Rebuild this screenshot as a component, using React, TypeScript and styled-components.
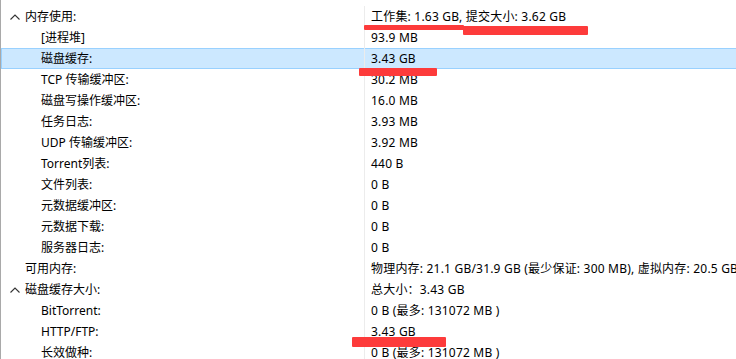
import React from "react";
import styled, { createGlobalStyle } from "styled-components";

const Global = createGlobalStyle`
  html, body { margin: 0; padding: 0; background: #fff; overflow: hidden; }
  body { font-family: "Noto Sans", "Noto Sans CJK SC", sans-serif; font-size: 12px; color: #000; }
`;

const Panel = styled.div`
  position: relative;
  width: 736px;
  height: 359px;
  box-sizing: border-box;
  border-left: 1px solid #a9a9a9;
  padding-top: 6px;
  overflow: hidden;
`;

const Row = styled.div<{ $selected?: boolean }>`
  display: grid;
  grid-template-columns: 363px 1fr;
  height: 21px;
  width: 760px;
  box-sizing: border-box;
  background: ${(p) => (p.$selected ? "#cce8ff" : "transparent")};
  box-shadow: ${(p) => (p.$selected ? "inset 0 0 0 1px #99d1ff" : "none")};
`;

const LabelCell = styled.div<{ $level: number }>`
  display: flex;
  align-items: center;
  padding-left: ${(p) => (p.$level === 0 ? 9 : 40)}px;
  white-space: nowrap;
  line-height: 21px;
`;

const Chevron = styled.span`
  display: inline-flex;
  width: 15px;
  height: 21px;
  align-items: center;
`;

const Spacer = styled.span`
  display: inline-block;
  width: 15px;
`;

const ValueCell = styled.div`
  border-left: 1px solid #ececec;
  padding-left: 6px;
  white-space: nowrap;
  overflow: hidden;
  line-height: 21px;
  letter-spacing: 0.2px;
`;

const Mark = styled.div`
  position: absolute;
  background: #fd3b3b;
  border-radius: 1px;
`;

type Item = { label: string; value: string; level: number; expanded?: boolean; selected?: boolean };

const items: Item[] = [
  { label: "内存使用:", value: "工作集: 1.63 GB, 提交大小: 3.62 GB", level: 0, expanded: true },
  { label: "[进程堆]", value: "93.9 MB", level: 1 },
  { label: "磁盘缓存:", value: "3.43 GB", level: 1, selected: true },
  { label: "TCP 传输缓冲区:", value: "30.2 MB", level: 1 },
  { label: "磁盘写操作缓冲区:", value: "16.0 MB", level: 1 },
  { label: "任务日志:", value: "3.93 MB", level: 1 },
  { label: "UDP 传输缓冲区:", value: "3.92 MB", level: 1 },
  { label: "Torrent列表:", value: "440 B", level: 1 },
  { label: "文件列表:", value: "0 B", level: 1 },
  { label: "元数据缓冲区:", value: "0 B", level: 1 },
  { label: "元数据下载:", value: "0 B", level: 1 },
  { label: "服务器日志:", value: "0 B", level: 1 },
  { label: "可用内存:", value: "物理内存: 21.1 GB/31.9 GB (最少保证: 300 MB), 虚拟内存: 20.5 GB", level: 0 },
  { label: "磁盘缓存大小:", value: "总大小：3.43 GB", level: 0, expanded: true },
  { label: "BitTorrent:", value: "0 B (最多: 131072 MB )", level: 1 },
  { label: "HTTP/FTP:", value: "3.43 GB", level: 1 },
  { label: "长效做种:", value: "0 B (最多: 131072 MB )", level: 1 },
];

const UpChevron = () => (
  <svg width="10" height="6" viewBox="0 0 10 6">
    <path d="M0.5 5.5 L5 1 L9.5 5.5" fill="none" stroke="#333" strokeWidth="1.1" />
  </svg>
);

export default function App() {
  return (
    <>
      <Global />
      <Panel>
        {items.map((it, i) => (
          <Row key={i} $selected={it.selected}>
            <LabelCell $level={it.level}>
              {it.level === 0 && (it.expanded ? <Chevron><UpChevron /></Chevron> : <Spacer />)}
              {it.label}
            </LabelCell>
            <ValueCell>{it.value}</ValueCell>
          </Row>
        ))}
        <Mark style={{ left: 363, top: 25, width: 100, height: 5 }} />
        <Mark style={{ left: 462, top: 26, width: 125, height: 9 }} />
        <Mark style={{ left: 358, top: 68, width: 78, height: 8 }} />
        <Mark style={{ left: 351, top: 337, width: 94, height: 10 }} />
      </Panel>
    </>
  );
}
